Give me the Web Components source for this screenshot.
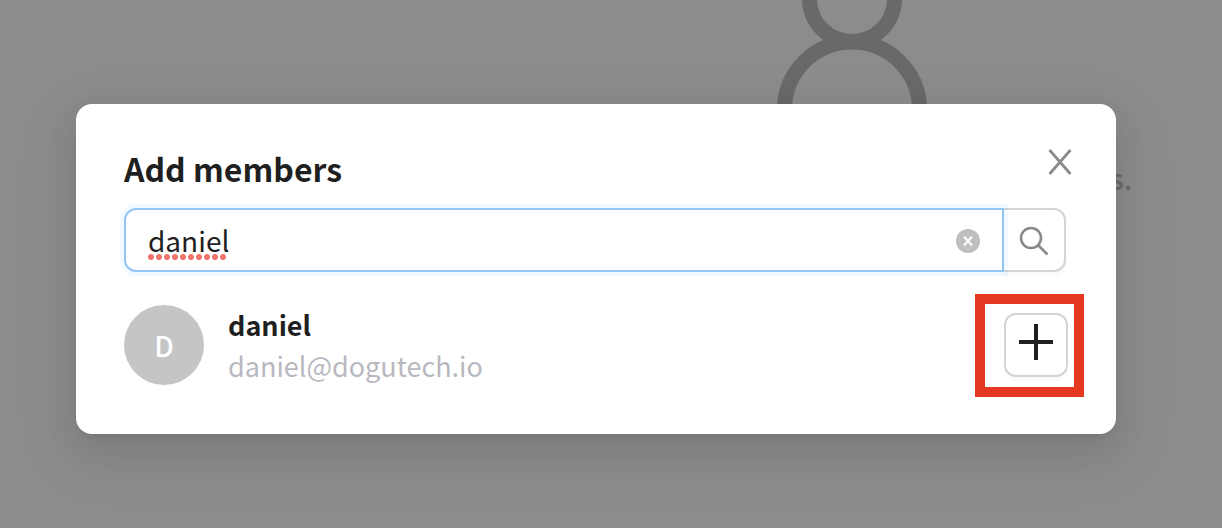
<!DOCTYPE html>
<html lang="en">
<head>
<meta charset="utf-8">
<title>Add members</title>
<style>
html, body { margin: 0; height: 100%; }
body { background: #8c8c8c; color: #1f1f1f; font: 28px/44px "Noto Sans CJK SC", "Noto Sans", sans-serif; overflow: hidden; }
</style>
</head>
<body>
<app-page>
  <empty-state slot="behind">s.</empty-state>
  <members-dialog heading="Add members">
    <member-search value="daniel"></member-search>
    <member-row initial="D" name="daniel" email="daniel@dogutech.io"></member-row>
  </members-dialog>
</app-page>
<script>
class Base extends HTMLElement {
  connectedCallback() {
    if (!this.shadowRoot) this.attachShadow({ mode: 'open' }).innerHTML = this.render();
  }
}

customElements.define('app-page', class extends Base {
  render() {
    return `<style>
      :host { display: block; position: relative; min-height: 100%; }
      .layer { position: relative; padding: 104px 106px 94px 76px; }
    </style>
    <slot name="behind"></slot>
    <div class="layer"><slot></slot></div>`;
  }
});

customElements.define('empty-state', class extends Base {
  render() {
    return `<style>
      :host { display: block; color: #696969; }
      svg { position: absolute; top: 0; right: 290px; }
      p { position: absolute; top: 156px; right: 90px; margin: 0; font-weight: 500; }
    </style>
    <svg width="160" height="120" viewBox="0 0 160 120" fill="none" stroke="currentColor" stroke-width="15" aria-hidden="true">
      <circle cx="80" cy="-1" r="42.5"/><path d="M12.5 120V109.5a67.5 67.5 0 0 1 135 0V120"/>
    </svg>
    <p><slot></slot></p>`;
  }
});

customElements.define('members-dialog', class extends Base {
  render() {
    return `<style>
      :host { display: block; }
      section { background: #fff; border-radius: 16px; padding: 40px 48px 48px;
        box-shadow: 0 12px 32px rgba(0,0,0,.08), 0 6px 12px -8px rgba(0,0,0,.12), 0 18px 56px 16px rgba(0,0,0,.05); }
      header { display: flex; justify-content: space-between; margin-right: -12px; height: 56px; margin-bottom: 8px; }
      h2 { margin: 0; font-size: 32px; line-height: 48px; font-weight: 700; }
      button { width: 40px; height: 36px; padding: 0; border: 0; background: none; color: #8a8a8a; display: grid; place-items: center; }
    </style>
    <section role="dialog" aria-labelledby="title">
      <header>
        <h2 id="title">${this.getAttribute('heading')}</h2>
        <button type="button" aria-label="Close"><svg width="24" height="26" viewBox="0 0 24 26" fill="none" stroke="currentColor" stroke-width="2.7"><path d="M1.5 1L22.5 25M22.5 1L1.5 25"/></svg></button>
      </header>
      <slot></slot>
    </section>`;
  }
});

customElements.define('member-search', class extends Base {
  render() {
    return `<style>
      :host { display: block; }
      form { display: flex; margin: 0 2px 0 0; }
      .field { position: relative; z-index: 1; flex: 1; min-width: 0; box-sizing: border-box; height: 64px; display: flex; align-items: center; padding: 0 22px;
        background: #fff; border: 2px solid #91c5f5; border-radius: 12px 0 0 12px; box-shadow: 0 0 0 4px rgba(5,145,255,.05); }
      input { flex: 1; min-width: 0; height: 44px; padding: 0; border: 0; outline: 0; background: none; color: inherit; font: inherit; }
      .spelling { position: absolute; left: 21px; top: 43px; width: 80px; height: 8px; pointer-events: none;
        background: radial-gradient(circle at 4px 4px, #f0766b 2.6px, transparent 3.4px) 0 0 / 8px 8px repeat-x; }
      button { padding: 0; border: 0; background: none; display: grid; place-items: center; }
      .field button { padding-top: 2px; }
      .search { box-sizing: border-box; width: 64px; height: 64px; margin-left: -2px; padding-top: 2px; color: #8a8a8a; background: #fff;
        border: 2px solid #d4d4d4; border-radius: 0 12px 12px 0; box-shadow: 0 4px 0 rgba(0,0,0,.02); }
    </style>
    <form>
      <div class="field">
        <input type="text" aria-label="Search members" spellcheck="false" value="${this.getAttribute('value')}">
        <span class="spelling"></span>
        <button type="reset" aria-label="Clear"><svg width="24" height="24" viewBox="0 0 24 24"><circle cx="12" cy="12" r="12" fill="#bfbfbf"/><path d="M8 7.500L16 16.500M16 7.500L8 16.500" stroke="#fff" stroke-width="2"/></svg></button>
      </div>
      <button class="search" type="submit" aria-label="Search"><svg width="30" height="30" viewBox="0 0 30 30" fill="none" stroke="currentColor" stroke-width="2.600"><circle cx="12" cy="12" r="10"/><path d="M19 19L28.500 28.500"/></svg></button>
    </form>`;
  }
});

customElements.define('member-row', class extends Base {
  render() {
    const a = n => this.getAttribute(n);
    return `<style>
      :host { display: flex; align-items: center; margin-top: 32px; }
      .avatar { flex: none; width: 80px; height: 80px; border-radius: 50%; background: #c5c5c5; color: #fff; text-align: center; line-height: 80px; font-weight: 500; }
      .text { flex: 1; min-width: 0; margin-left: 24px; font-size: 27px; line-height: 41px; }
      .name { font-weight: 700; }
      .email { color: #b8b8c0; }
      .action { position: relative; flex: none; }
      button { box-sizing: border-box; width: 64px; height: 64px; padding: 0 0 6px; border: 2px solid #d4d4d4; border-radius: 12px; background: #fff; color: #1f1f1f;
        display: grid; place-items: center; box-shadow: 0 4px 0 rgba(0,0,0,.02); }
      .highlight { position: absolute; inset: -19px -16px -20px -29px; border: 10px solid #e43820; pointer-events: none; }
    </style>
    <div class="avatar">${a('initial')}</div>
    <div class="text"><div class="name">${a('name')}</div><div class="email">${a('email')}</div></div>
    <div class="action">
      <button type="button" aria-label="Add ${a('name')}"><svg width="34" height="36" viewBox="0 0 34 36" fill="none" stroke="currentColor" stroke-width="4"><path d="M17 0V36M0 18H34"/></svg></button>
      <span class="highlight"></span>
    </div>`;
  }
});
</script>
</body>
</html>
